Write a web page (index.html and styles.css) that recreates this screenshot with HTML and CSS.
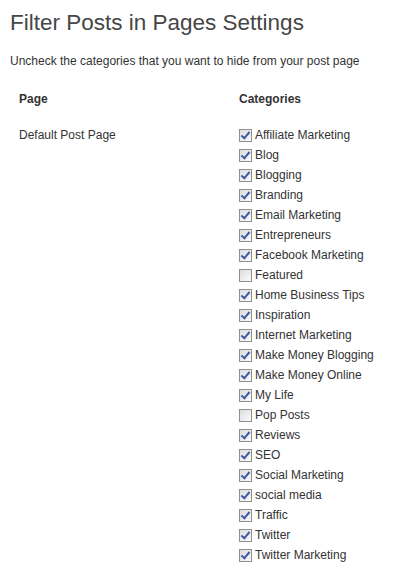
FILE: index.html
```html
<!DOCTYPE html>
<html lang="en">
<head>
    <meta charset="UTF-8">
    <title>Filter Posts in Pages Settings</title>
    <link rel="stylesheet" href="styles.css">
</head>
<body>
    <div class="wrap">
        <h2>Filter Posts in Pages Settings</h2>
        <p class="intro">Uncheck the categories that you want to hide from your post page</p>
        <table class="form-table">
            <tr>
                <th class="col-page">Page</th>
                <th>Categories</th>
            </tr>
            <tr>
                <td>Default Post Page</td>
                <td>
                    <ul class="cats">
                        <li><label><input type="checkbox" checked> Affiliate Marketing</label></li>
                        <li><label><input type="checkbox" checked> Blog</label></li>
                        <li><label><input type="checkbox" checked> Blogging</label></li>
                        <li><label><input type="checkbox" checked> Branding</label></li>
                        <li><label><input type="checkbox" checked> Email Marketing</label></li>
                        <li><label><input type="checkbox" checked> Entrepreneurs</label></li>
                        <li><label><input type="checkbox" checked> Facebook Marketing</label></li>
                        <li><label><input type="checkbox"> Featured</label></li>
                        <li><label><input type="checkbox" checked> Home Business Tips</label></li>
                        <li><label><input type="checkbox" checked> Inspiration</label></li>
                        <li><label><input type="checkbox" checked> Internet Marketing</label></li>
                        <li><label><input type="checkbox" checked> Make Money Blogging</label></li>
                        <li><label><input type="checkbox" checked> Make Money Online</label></li>
                        <li><label><input type="checkbox" checked> My Life</label></li>
                        <li><label><input type="checkbox"> Pop Posts</label></li>
                        <li><label><input type="checkbox" checked> Reviews</label></li>
                        <li><label><input type="checkbox" checked> SEO</label></li>
                        <li><label><input type="checkbox" checked> Social Marketing</label></li>
                        <li><label><input type="checkbox" checked> social media</label></li>
                        <li><label><input type="checkbox" checked> Traffic</label></li>
                        <li><label><input type="checkbox" checked> Twitter</label></li>
                        <li><label><input type="checkbox" checked> Twitter Marketing</label></li>
                    </ul>
                </td>
            </tr>
        </table>
    </div>
</body>
</html>
```

FILE: styles.css
```css
body {
    margin: 0;
    background: #fff;
    color: #333;
    font-family: 'Liberation Sans', Arial, sans-serif;
    font-size: 12px;
}

.wrap {
    padding: 0 10px;
}

h2 {
    margin: 0;
    padding: 8px 0 0;
    font-size: 22.5px;
    font-weight: normal;
    line-height: 29px;
    color: #464646;
}

.intro {
    margin: 16px 0 0;
    line-height: 16px;
}

.form-table {
    width: 100%;
    table-layout: fixed;
    border-collapse: collapse;
    margin-top: 14px;
}

.form-table th,
.form-table td {
    padding: 0 9px;
    text-align: left;
    vertical-align: top;
}

.form-table .col-page {
    width: 202px;
}

.form-table th {
    height: 34px;
    font-weight: bold;
    line-height: 16px;
    padding-top: 8px;
}

.form-table td {
    line-height: 20px;
}

.cats {
    list-style: none;
    margin: 0;
    padding: 0;
}

.cats li {
    height: 20px;
}

.cats label {
    display: flex;
    align-items: center;
    gap: 3px;
}

.cats input {
    appearance: none;
    width: 13px;
    height: 13px;
    margin: 0;
    border: 1px solid #8e8f8f;
    background: linear-gradient(135deg, #dcdcdc, #fbfbfb);
    position: relative;
}

.cats input:checked::after {
    content: '';
    position: absolute;
    left: 3px;
    top: 0;
    width: 3px;
    height: 7px;
    border: solid #3d5ba5;
    border-width: 0 2px 2px 0;
    transform: rotate(40deg);
}
```
